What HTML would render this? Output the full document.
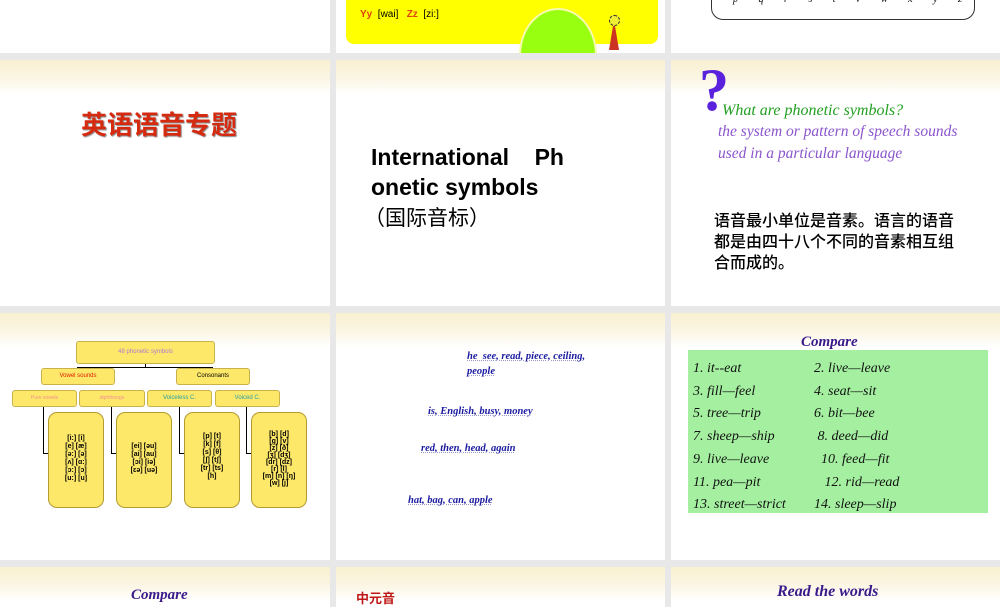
<!DOCTYPE html>
<html><head><meta charset="utf-8"><style>
body{margin:0;width:1000px;height:600px;background:#e8e8e8;position:relative;overflow:hidden;font-family:"Liberation Sans","Noto Sans CJK SC",sans-serif}
.s{position:absolute;background:#fff;overflow:hidden}
.hb{position:absolute;left:0;right:0;top:0;height:34px;background:linear-gradient(#f8f0d0,#fbf6e4 55%,#fff)}
.a{position:absolute;white-space:nowrap}
.it{font-family:"Liberation Serif",serif;font-style:italic}
.bx{position:absolute;background:#fde86a;border:1px solid #c9b24a;border-radius:3px;font-size:6px;text-align:center;line-height:14px}
.big{position:absolute;background:#fde86a;border:1px solid #b59a30;border-radius:9px;font-size:7px;font-weight:bold;line-height:8px;text-align:center;padding-top:22px;box-sizing:border-box}
.ln{position:absolute;background:#000}
.cp{font-family:"Liberation Serif",serif;font-style:italic;font-size:14px;color:#111}
.bl{color:#1a1aa0;font-family:"Liberation Serif",serif;font-style:italic;font-weight:bold;font-size:10.5px;text-decoration:underline dotted #99c}
</style></head><body>
<!-- row 0 -->
<div class="s" style="left:0;top:0;width:330px;height:53px"></div>
<div class="s" style="left:336px;top:0;width:329px;height:53px">
 <div style="position:absolute;left:10px;top:-10px;width:312px;height:54px;background:#ffff00;border-radius:8px"></div>
 <div style="position:absolute;left:183px;top:8px;width:74px;height:90px;background:#99ff11;border:2px solid #f8f8b0;border-radius:50%"></div>
 <div style="position:absolute;left:273px;top:20px;width:0;height:0;border-left:5px solid transparent;border-right:5px solid transparent;border-bottom:30px solid #cc3322"></div>
 <div style="position:absolute;left:273px;top:15px;width:9px;height:9px;border-radius:50%;background:#ee3;border:1px dashed #333"></div>
 <div class="a" style="left:24px;top:9px;font-size:10px"><b style="color:#e04010">Yy</b> &nbsp;[wai] &nbsp; <b style="color:#e04010">Zz</b> &nbsp;[zi:]</div>
</div>
<div class="s" style="left:671px;top:0;width:329px;height:53px">
 <div style="position:absolute;left:40px;top:-20px;width:262px;height:38px;border:1.5px solid #333;border-radius:12px"></div>
 <div class="a it" style="left:62px;top:-6px;font-size:10px;letter-spacing:9px">p q r s t v w x y z</div>
</div>
<!-- row 1 -->
<div class="s" style="left:0;top:60px;width:330px;height:246px"><div class="hb"></div>
 <div class="a" style="left:81px;top:45px;font-size:26px;font-weight:bold;color:#d62a10;text-shadow:1px 1px 1px #888">英语语音专题</div>
</div>
<div class="s" style="left:336px;top:60px;width:329px;height:246px"><div class="hb"></div>
 <div class="a" style="left:35px;top:82px;font-size:23px;font-weight:bold;line-height:30px;color:#000">International &nbsp;&nbsp; Ph<br>onetic symbols</div>
 <div class="a" style="left:28px;top:142px;font-size:21px;color:#000">（国际音标）</div>
</div>
<div class="s" style="left:671px;top:60px;width:329px;height:246px"><div class="hb"></div>
 <div class="a" style="left:28px;top:-4px;font-size:60px;font-family:'Liberation Serif',serif;color:#5a22dd;font-weight:bold">?</div>
 <div class="a it" style="left:51px;top:42px;font-size:16px;color:#22a022">What are phonetic symbols?</div>
 <div class="a it" style="left:47px;top:63px;font-size:15.5px;color:#8a55cc">the system or pattern of speech sounds</div>
 <div class="a it" style="left:47px;top:85px;font-size:15.5px;color:#8a55cc">used in a particular language</div>
 <div class="a" style="left:43px;top:151px;font-size:16px;line-height:21px;color:#000;font-weight:500">语音最小单位是音素。语言的语音<br>都是由四十八个不同的音素相互组<br>合而成的。</div>
</div>
<!-- row 2 -->
<div class="s" style="left:0;top:313px;width:330px;height:247px"><div class="hb"></div>
 <div class="ln" style="left:145px;top:49px;width:1px;height:5px"></div>
 <div class="ln" style="left:77px;top:54px;width:136px;height:1px"></div>
 <div class="ln" style="left:77px;top:54px;width:1px;height:3px"></div>
 <div class="ln" style="left:212px;top:54px;width:1px;height:3px"></div>
 <div class="ln" style="left:44px;top:71px;width:60px;height:1px"></div>
 <div class="ln" style="left:179px;top:71px;width:68px;height:1px"></div>
 <div class="ln" style="left:43px;top:92px;width:1px;height:48px"></div><div class="ln" style="left:43px;top:140px;width:5px;height:1px"></div>
 <div class="ln" style="left:111px;top:92px;width:1px;height:48px"></div><div class="ln" style="left:111px;top:140px;width:5px;height:1px"></div>
 <div class="ln" style="left:179px;top:92px;width:1px;height:48px"></div><div class="ln" style="left:179px;top:140px;width:5px;height:1px"></div>
 <div class="ln" style="left:246px;top:92px;width:1px;height:48px"></div><div class="ln" style="left:246px;top:140px;width:5px;height:1px"></div>
 <div class="bx" style="left:76px;top:28px;width:137px;height:21px;line-height:21px;color:#b07ad0">48 phonetic symbols</div>
 <div class="bx" style="left:41px;top:55px;width:72px;height:15px;color:#e02000">Vowel sounds</div>
 <div class="bx" style="left:176px;top:55px;width:72px;height:15px">Consonants</div>
 <div class="bx" style="left:12px;top:77px;width:63px;height:15px;color:#f29090;font-size:5px">Pure vowels</div>
 <div class="bx" style="left:79px;top:77px;width:64px;height:15px;color:#f29090;font-size:5px">diphthongs</div>
 <div class="bx" style="left:147px;top:77px;width:63px;height:15px;color:#2aa0a0">Voiceless C.</div>
 <div class="bx" style="left:215px;top:77px;width:63px;height:15px;color:#2aa0a0">Voiced C.</div>
 <div class="big" style="left:48px;top:99px;width:56px;height:96px">[i:] [i]<br>[e] [æ]<br>[ə:] [ə]<br>[ʌ] [ɑ:]<br>[ɔ:] [ɔ]<br>[u:] [u]</div>
 <div class="big" style="left:116px;top:99px;width:56px;height:96px;padding-top:30px">[ei] [əu]<br>[ai] [au]<br>[ɔi] [iə]<br>[εə] [uə]</div>
 <div class="big" style="left:184px;top:99px;width:56px;height:96px;padding-top:20px">[p] [t]<br>[k] [f]<br>[s] [θ]<br>[ʃ] [tʃ]<br>[tr] [ts]<br>[h]</div>
 <div class="big" style="left:251px;top:99px;width:56px;height:96px;padding-top:18px;line-height:7px">[b] [d]<br>[g] [v]<br>[z] [ð]<br>[ʒ] [dʒ]<br>[dr] [dz]<br>[r] [l]<br>[m] [n] [ŋ]<br>[w] [j]</div>
</div>
<div class="s" style="left:336px;top:313px;width:329px;height:247px"><div class="hb"></div>
 <div class="a bl" style="left:131px;top:36px;line-height:15px">he &nbsp;see, read, piece, ceiling,<br>people</div>
 <div class="a bl" style="left:92px;top:93px">is, English, busy, money</div>
 <div class="a bl" style="left:85px;top:130px">red, then, head, again</div>
 <div class="a bl" style="left:72px;top:182px">hat, bag, can, apple</div>
</div>
<div class="s" style="left:671px;top:313px;width:329px;height:247px"><div class="hb"></div>
 <div class="a it" style="left:130px;top:21px;font-size:15px;font-weight:bold;color:#3a1a8a">Compare</div>
 <div style="position:absolute;left:17px;top:37px;width:300px;height:163px;background:#a4f0a0"></div>
 <div class="a cp" style="left:22px;top:45px;line-height:22.7px">1. it--eat<br>3. fill—feel<br>5. tree—trip<br>7. sheep—ship<br>9. live—leave<br>11. pea—pit<br>13. street—strict</div>
 <div class="a cp" style="left:143px;top:45px;line-height:22.7px">2. live—leave<br>4. seat—sit<br>6. bit—bee<br>&nbsp;8. deed—did<br>&nbsp;&nbsp;10. feed—fit<br>&nbsp;&nbsp;&nbsp;12. rid—read<br>14. sleep—slip</div>
</div>
<!-- row 3 -->
<div class="s" style="left:0;top:567px;width:330px;height:40px"><div class="hb"></div>
 <div class="a it" style="left:131px;top:20px;font-size:15px;font-weight:bold;color:#3a1a8a">Compare</div></div>
<div class="s" style="left:336px;top:567px;width:329px;height:40px"><div class="hb"></div>
 <div class="a" style="left:20px;top:21px;font-size:13px;font-weight:bold;color:#c01818">中元音</div></div>
<div class="s" style="left:671px;top:567px;width:329px;height:40px"><div class="hb"></div>
 <div class="a it" style="left:106px;top:16px;font-size:16px;font-weight:bold;color:#3a1a8a">Read the words</div></div>
</body></html>
